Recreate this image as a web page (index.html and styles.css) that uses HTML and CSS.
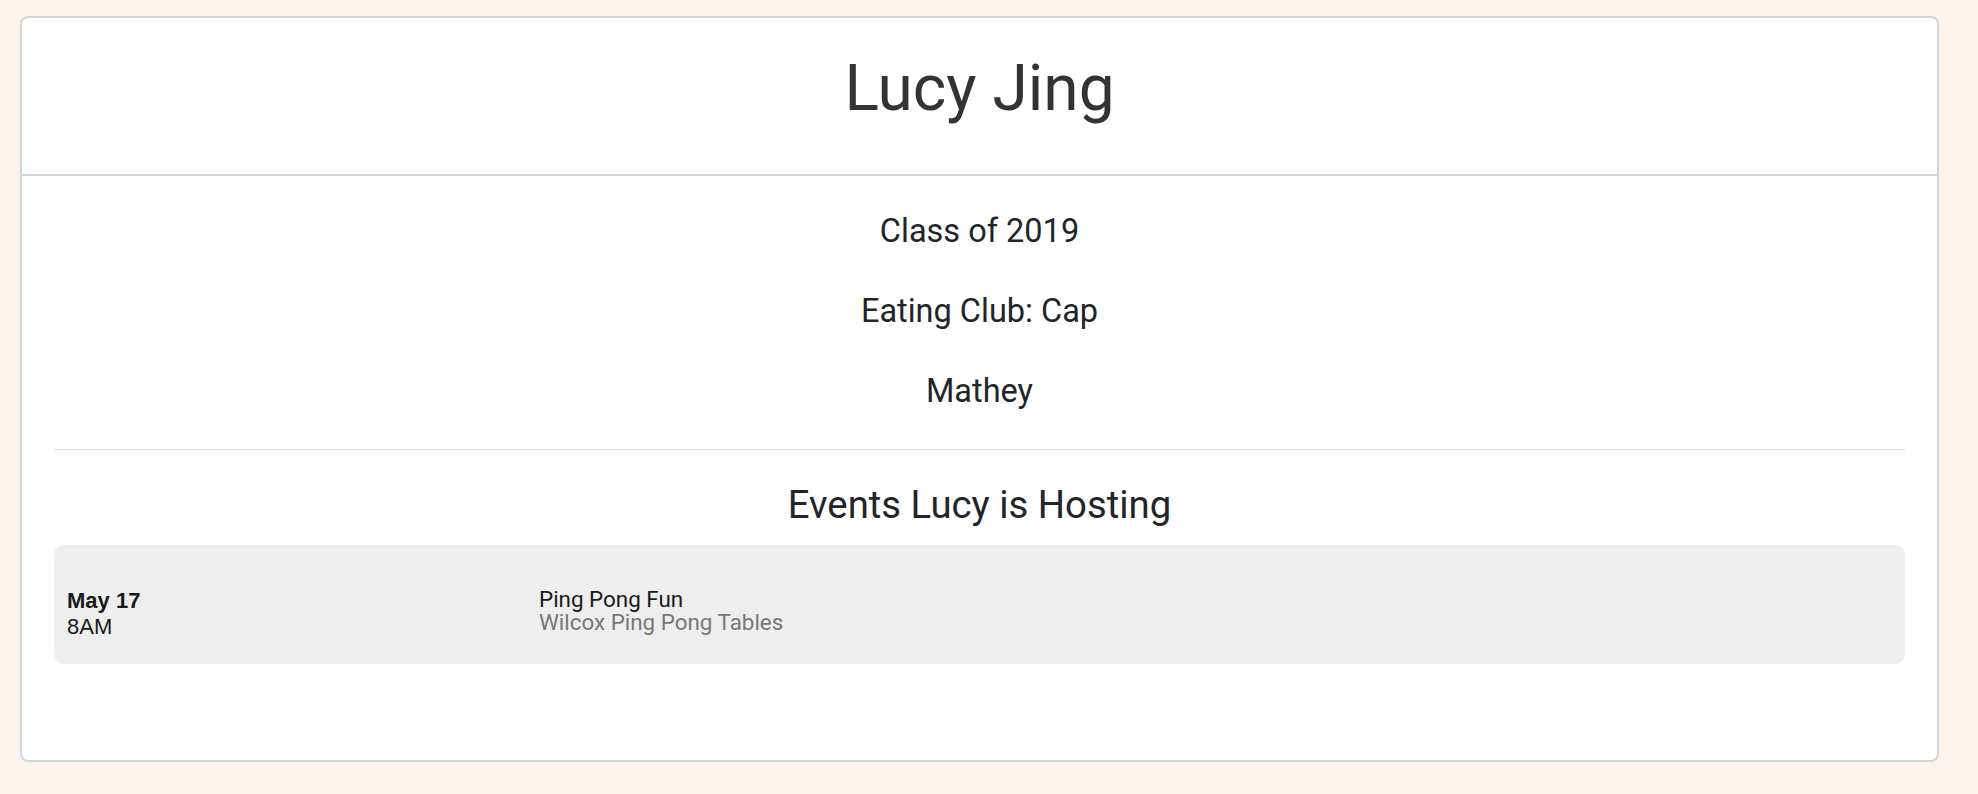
FILE: index.html
```html
<!DOCTYPE html>
<html>
<head>
<meta charset="utf-8">
<link rel="stylesheet" href="styles.css">
</head>
<body>
<div class="page">
  <div class="card">
    <div class="card-header">
      <h1 class="name">Lucy Jing</h1>
    </div>
    <div class="card-body">
      <p class="info">Class of 2019</p>
      <p class="info">Eating Club: Cap</p>
      <p class="info">Mathey</p>
      <hr class="divider">
      <h2 class="events-title">Events Lucy is Hosting</h2>
      <div class="event">
        <div class="event-date">
          <div class="date">May 17</div>
          <div class="time">8AM</div>
        </div>
        <div class="event-info">
          <div class="event-name">Ping Pong Fun</div>
          <div class="event-place">Wilcox Ping Pong Tables</div>
        </div>
      </div>
    </div>
  </div>
</div>
</body>
</html>
```

FILE: styles.css
```css
html, body {
  margin: 0;
  padding: 0;
  background: #fef4eb;
  font-family: Roboto, "Liberation Sans", sans-serif;
  color: #212529;
}

.page {
  padding: 16px 39px 33px 20px;
}

.card {
  background: #fff;
  border: 2px solid #d0d7db;
  border-radius: 8px;
}

.card-header {
  border-bottom: 2px solid #d0d7db;
  padding: 39px 0 53px;
  text-align: center;
}

.name {
  margin: 0;
  font-size: 64px;
  font-weight: 400;
  line-height: 64px;
  color: #333;
}

.card-body {
  padding: 15px 32px 96px;
}

.info {
  margin: 0;
  text-align: center;
  font-size: 32.5px;
  line-height: 80px;
}

.divider {
  border: 0;
  border-top: 1px solid #e2e2e2;
  margin: 18px 0 0;
}

.events-title {
  margin: 25px 0 10px;
  text-align: center;
  font-size: 38.3px;
  font-weight: 400;
  line-height: 60px;
}

.event {
  background: #eeeeee;
  border-radius: 10px;
  display: grid;
  grid-template-columns: 472px 1fr;
  padding: 43px 13px 24px;
}

.event-date {
  font-family: "Liberation Sans", Arial, sans-serif;
  font-size: 22px;
  line-height: 26px;
  color: #1a1a1a;
}

.date {
  font-weight: 700;
}

.event-info {
  font-size: 22.4px;
  line-height: 23px;
}

.event-name {
  color: #1a1a1a;
}

.event-place {
  color: #777;
}
```
